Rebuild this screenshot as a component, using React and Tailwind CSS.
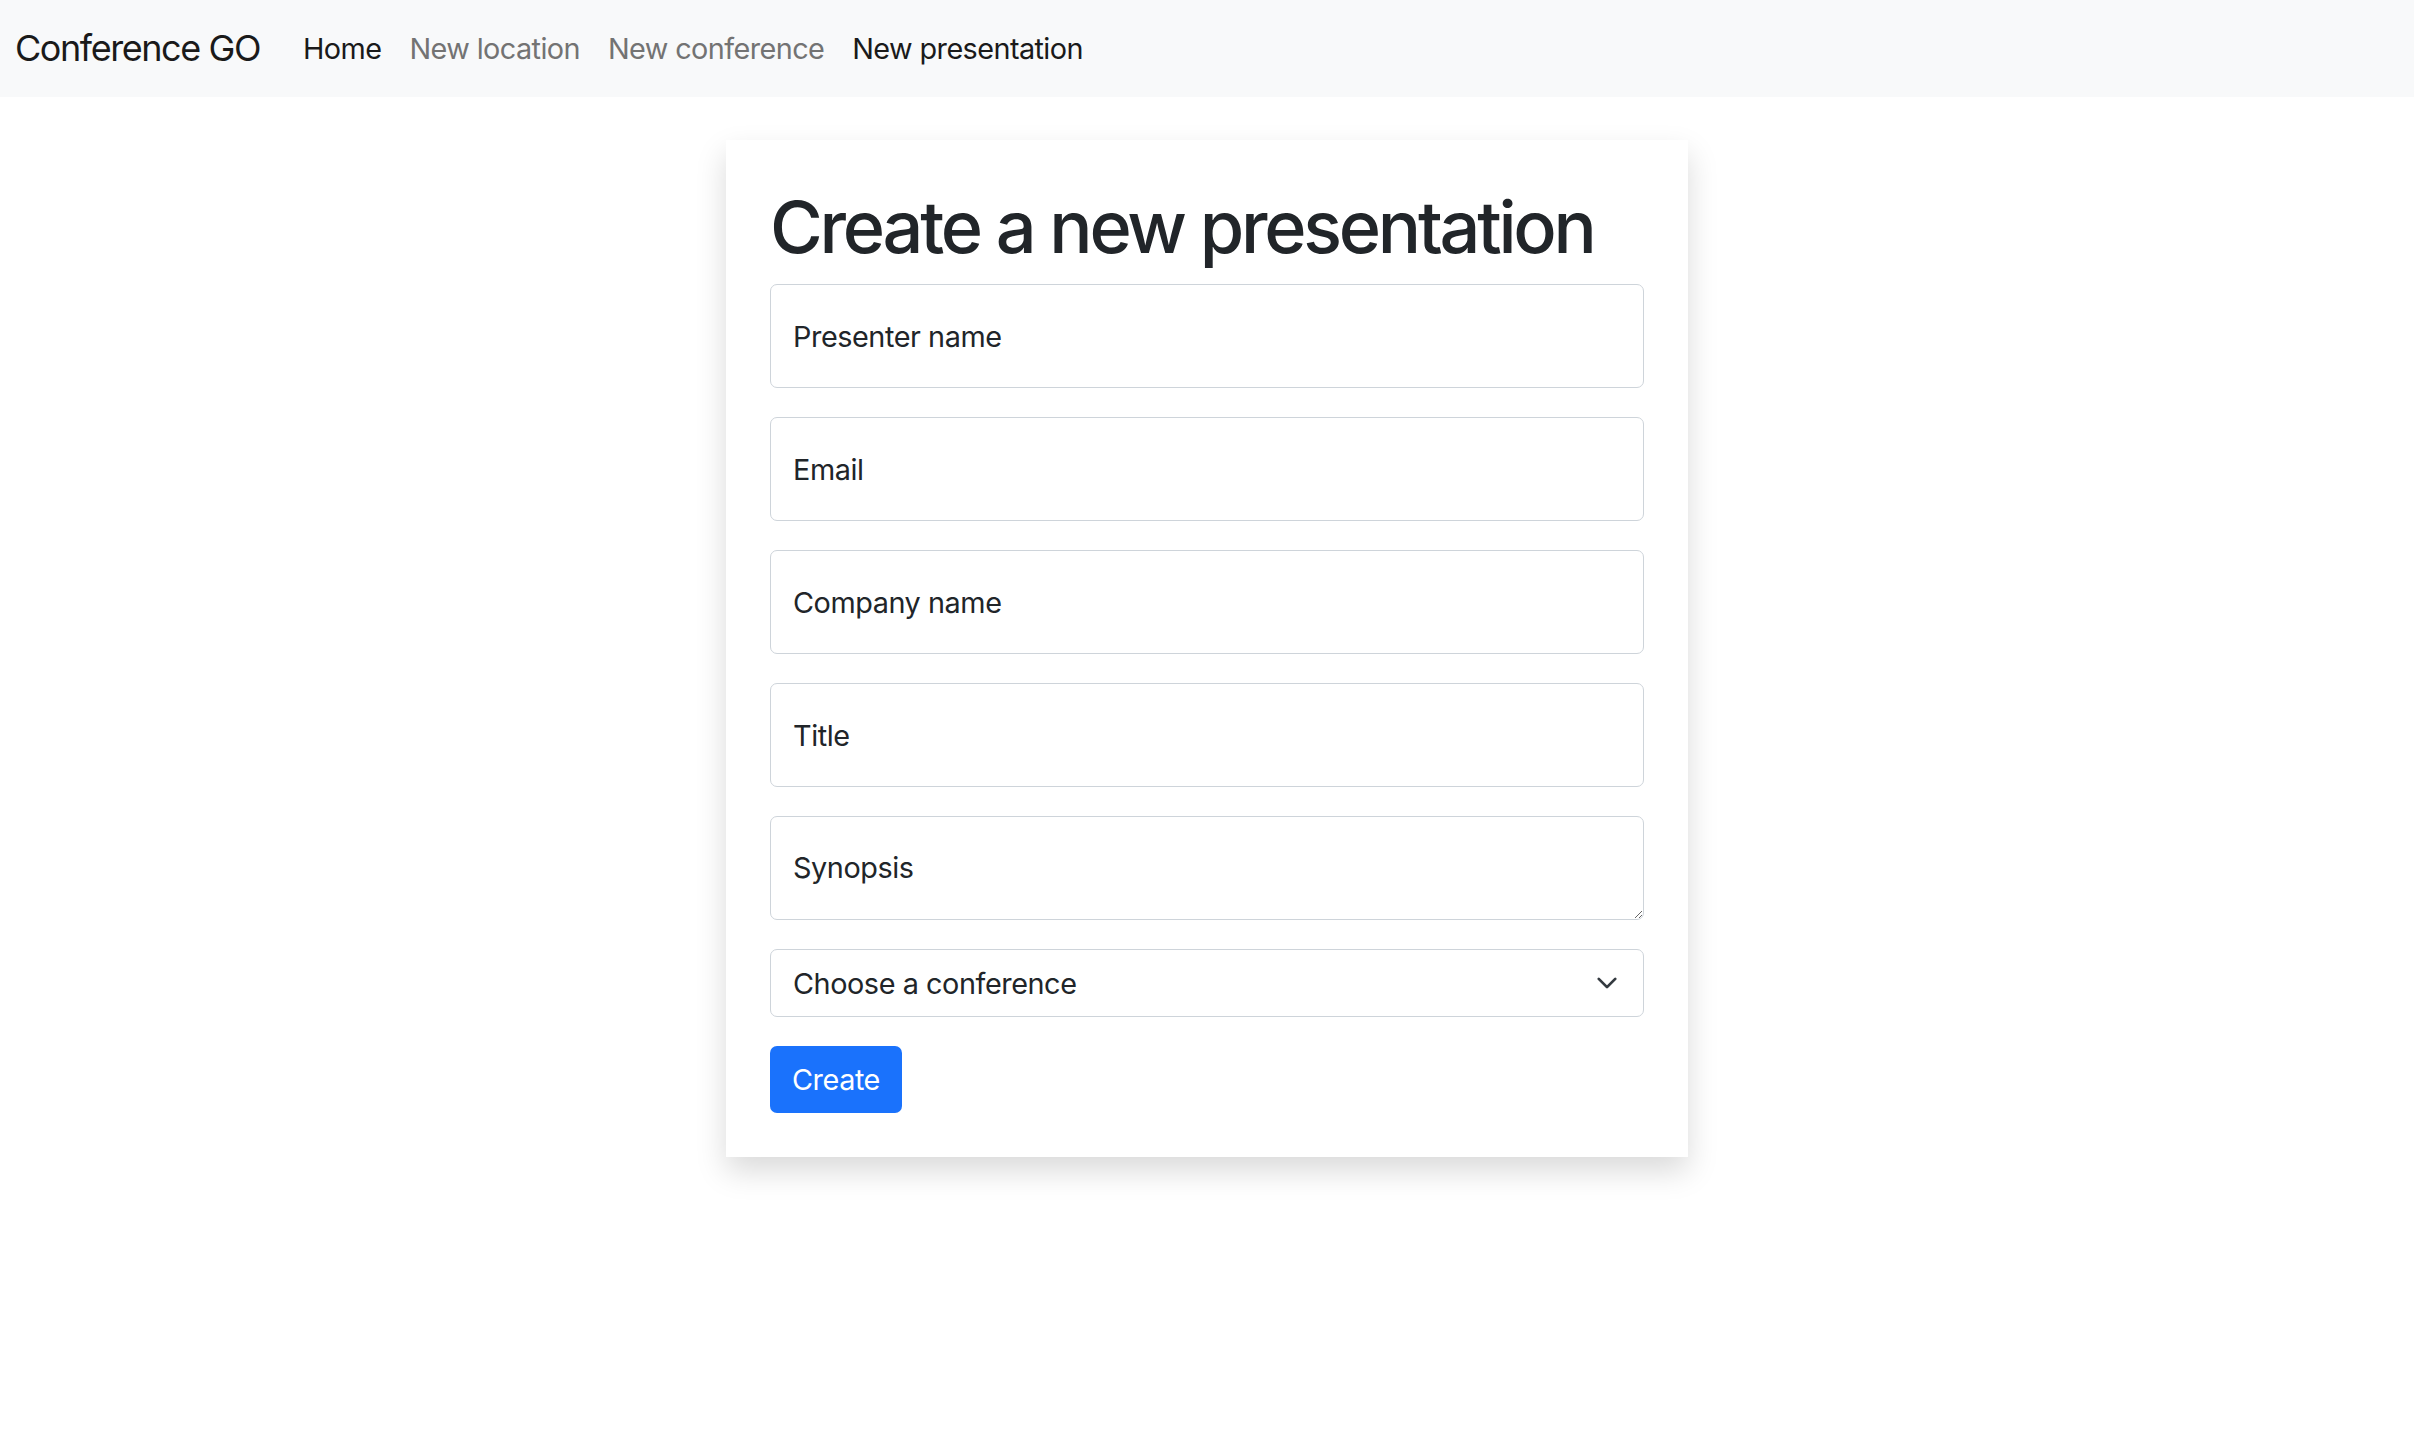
import React from "react";

const FONT = { fontFamily: "Inter, 'Noto Sans', 'Liberation Sans', sans-serif" };

const FIELDS = [
  { name: "name", label: "Presenter name", type: "text" },
  { name: "email", label: "Email", type: "email" },
  { name: "company", label: "Company name", type: "text" },
  { name: "title", label: "Title", type: "text" },
];

function NavBar() {
  const links = [
    { label: "Home", active: true },
    { label: "New location" },
    { label: "New conference" },
    { label: "New presentation", active: true },
  ];
  return (
    <nav className="h-[97px] bg-[#f8f9fa] flex items-center pl-[15px]">
      <a href="#" className="text-[36px] leading-[1.5] text-[#1a1a1a] mr-[29px] tracking-[-0.04em] -mt-[2px]">
        Conference GO
      </a>
      <ul className="flex items-center">
        {links.map((l) => (
          <li key={l.label}>
            <a
              href="#"
              className={
                "block px-[14px] text-[28.8px] leading-[1.5] tracking-[-0.02em] " +
                (l.active ? "text-[#1a1a1a]" : "text-[#737373]")
              }
            >
              {l.label}
            </a>
          </li>
        ))}
      </ul>
    </nav>
  );
}

export default function App() {
  return (
    <div style={FONT} className="min-h-screen bg-white text-[#212529]">
      <NavBar />
      <main className="flex justify-center pt-[43px]">
        <div className="w-[962px] bg-white p-[44px] shadow-[0_14px_29px_rgba(0,0,0,0.15)]">
          <h1 className="text-[72px] leading-[1.2] font-medium tracking-[-0.045em] mb-[14px]">
            Create a new presentation
          </h1>
          <form onSubmit={(e) => e.preventDefault()}>
            {FIELDS.map((f) => (
              <div key={f.name} className="mb-[29px]">
                <input
                  name={f.name}
                  type={f.type}
                  placeholder={f.label}
                  className="w-full h-[104px] rounded-[7px] border border-[#ced4da] px-[22px] text-[28.8px] tracking-[-0.015em] text-[#212529] placeholder:text-[#212529] outline-none"
                />
              </div>
            ))}
            <div className="mb-[29px]">
              <textarea
                name="synopsis"
                placeholder="Synopsis"
                className="block w-full h-[104px] rounded-[7px] border border-[#ced4da] px-[22px] pt-[29px] pb-0 text-[28.8px] leading-[1.5] tracking-[-0.015em] text-[#212529] placeholder:text-[#212529] outline-none"
              />
            </div>
            <div className="relative mb-[29px]">
              <select
                name="conference"
                defaultValue=""
                className="w-full h-[68px] appearance-none rounded-[7px] border border-[#ced4da] bg-white pl-[22px] pr-[60px] text-[28.8px] tracking-[-0.015em] text-[#212529] outline-none"
              >
                <option value="">Choose a conference</option>
              </select>
              <svg
                className="absolute right-[26px] top-1/2 -translate-y-1/2 pointer-events-none"
                width="22"
                height="22"
                viewBox="0 0 16 16"
                fill="none"
              >
                <path d="m2 5 6 6 6-6" stroke="#343a40" strokeWidth="2" strokeLinecap="round" strokeLinejoin="round" />
              </svg>
            </div>
            <button
              type="submit"
              className="h-[67px] px-[22px] rounded-[7px] bg-[#1a72fc] text-white text-[28.8px] leading-[1.5] tracking-[-0.015em]"
            >
              Create
            </button>
          </form>
        </div>
      </main>
    </div>
  );
}
